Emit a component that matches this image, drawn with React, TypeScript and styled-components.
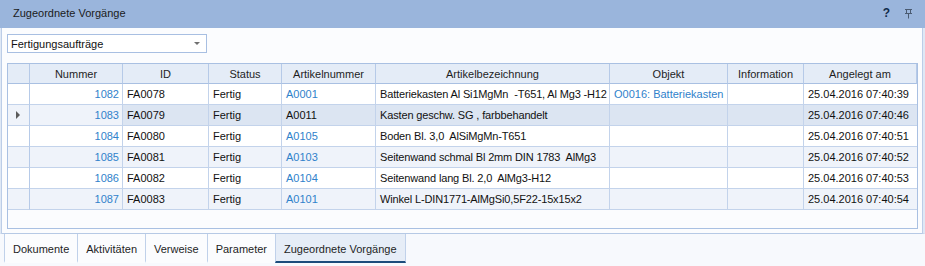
import React from 'react'
import styled, { createGlobalStyle } from 'styled-components'

const GlobalStyle = createGlobalStyle`
  html, body {
    margin: 0;
    padding: 0;
    background: #ffffff;
  }
  body {
    font-family: 'Liberation Sans', Arial, sans-serif;
    font-size: 11px;
    color: #1e1e1e;
  }
`

type Row = {
  nummer: number
  id: string
  status: string
  artikelnummer: string
  artikelLink: boolean
  bezeichnung: string
  objekt?: string
  information?: string
  angelegt: string
}

const rows: Row[] = [
  {
    nummer: 1082,
    id: 'FA0078',
    status: 'Fertig',
    artikelnummer: 'A0001',
    artikelLink: true,
    bezeichnung: 'Batteriekasten Al Si1MgMn  -T651, Al Mg3 -H12',
    objekt: 'O0016: Batteriekasten',
    angelegt: '25.04.2016 07:40:39',
  },
  {
    nummer: 1083,
    id: 'FA0079',
    status: 'Fertig',
    artikelnummer: 'A0011',
    artikelLink: false,
    bezeichnung: 'Kasten geschw. SG , farbbehandelt',
    angelegt: '25.04.2016 07:40:46',
  },
  {
    nummer: 1084,
    id: 'FA0080',
    status: 'Fertig',
    artikelnummer: 'A0105',
    artikelLink: true,
    bezeichnung: 'Boden Bl. 3,0  AlSiMgMn-T651',
    angelegt: '25.04.2016 07:40:51',
  },
  {
    nummer: 1085,
    id: 'FA0081',
    status: 'Fertig',
    artikelnummer: 'A0103',
    artikelLink: true,
    bezeichnung: 'Seitenwand schmal Bl 2mm DIN 1783  AlMg3',
    angelegt: '25.04.2016 07:40:52',
  },
  {
    nummer: 1086,
    id: 'FA0082',
    status: 'Fertig',
    artikelnummer: 'A0104',
    artikelLink: true,
    bezeichnung: 'Seitenwand lang Bl. 2,0  AlMg3-H12',
    angelegt: '25.04.2016 07:40:53',
  },
  {
    nummer: 1087,
    id: 'FA0083',
    status: 'Fertig',
    artikelnummer: 'A0101',
    artikelLink: true,
    bezeichnung: 'Winkel L-DIN1771-AlMgSi0,5F22-15x15x2',
    angelegt: '25.04.2016 07:40:54',
  },
]

const columns = ['', 'Nummer', 'ID', 'Status', 'Artikelnummer', 'Artikelbezeichnung', 'Objekt', 'Information', 'Angelegt am']

const tabs = ['Dokumente', 'Aktivitäten', 'Verweise', 'Parameter', 'Zugeordnete Vorgänge']

const SELECTED_ROW = 1

const Panel = styled.div`
  width: 925px;
  height: 266px;
  display: flex;
  flex-direction: column;
  background: #f4f7fc;
  box-sizing: border-box;
  overflow: hidden;
`

const TitleBar = styled.div`
  height: 28px;
  flex: none;
  display: flex;
  align-items: center;
  padding: 0 12px 0 13px;
  background: #9ab5dc;
  color: #1b1b1b;
  font-size: 11px;
  box-sizing: border-box;
`

const Title = styled.span`
  flex: 1;
  padding-bottom: 2px;
`

const TitleButtons = styled.div`
  display: flex;
  align-items: center;
  gap: 14px;
  padding-bottom: 2px;
`

const HelpGlyph = styled.span`
  font-weight: bold;
  font-size: 12px;
  color: #102a4a;
`

const Body = styled.div`
  flex: none;
  height: 206px;
  display: flex;
  flex-direction: column;
  background: #fbfcfe;
  border-left: 2px solid #dfe8f5;
  border-right: 3px solid #dfe8f5;
  border-bottom: 1px solid #b6c9e5;
  box-sizing: border-box;
  padding: 6px 2px 0 5px;
  position: relative;
  &::before {
    content: '';
    position: absolute;
    left: -1px;
    top: 0;
    bottom: 0;
    width: 1px;
    background: #bccde7;
  }
  &::after {
    content: '';
    position: absolute;
    right: -1px;
    top: 0;
    bottom: 0;
    width: 1px;
    background: #bccde7;
  }
`

const Combo = styled.div`
  width: 200px;
  height: 19px;
  flex: none;
  display: flex;
  align-items: center;
  justify-content: space-between;
  padding: 0 6px 0 3px;
  background: #ffffff;
  border: 1px solid #a8bfe2;
  box-sizing: border-box;
  font-size: 11px;
  color: #111;
`

const ComboArrow = styled.span`
  width: 0;
  height: 0;
  border-left: 3px solid transparent;
  border-right: 3px solid transparent;
  border-top: 3px solid #707070;
`

const Grid = styled.div`
  margin-top: 10px;
  width: 911px;
  height: 166px;
  border: 1px solid #a9c0e2;
  box-sizing: border-box;
  background: #fbfcfe;
  display: grid;
  grid-template-columns: 22px 93px 86px 73px 94px 234px 118px 76px 113px;
  grid-auto-rows: 21px;
  grid-template-rows: 20px;
  align-content: start;
`

const HeaderCell = styled.div`
  background: #e4ecf7;
  border-right: 1px solid #b6cae8;
  border-bottom: 1px solid #a9c0e2;
  display: flex;
  align-items: center;
  justify-content: center;
  color: #1e1e1e;
  font-size: 11px;
  &:last-child {
    border-right: none;
  }
`

type Tone = 'white' | 'alt' | 'sel'

const Cell = styled.div<{ $align?: 'left' | 'right'; $tone: Tone; $link?: boolean; $tight?: boolean }>`
  background: ${(p) => (p.$tone === 'sel' ? '#dce5f2' : p.$tone === 'alt' ? '#eff3fa' : '#ffffff')};
  border-right: 1px solid #c3d3eb;
  border-bottom: 1px solid #c3d3eb;
  display: flex;
  align-items: center;
  justify-content: ${(p) => (p.$align === 'right' ? 'flex-end' : 'flex-start')};
  padding: 0 3px 0 4px;
  color: ${(p) => (p.$link ? '#2f82cb' : '#111111')};
  font-size: 11px;
  letter-spacing: ${(p) => (p.$tight ? '-0.15px' : 'normal')};
  white-space: pre;
  overflow: hidden;
  box-sizing: border-box;
  &:nth-child(9n) {
    border-right: none;
  }
`

const IndicatorCell = styled.div<{ $tone: Tone }>`
  background: ${(p) => (p.$tone === 'alt' ? '#eff3fa' : '#ffffff')};
  border-right: 1px solid #b6cae8;
  border-bottom: 1px solid #c3d3eb;
  display: flex;
  align-items: center;
  justify-content: center;
`

const RowMarker = styled.span`
  width: 0;
  height: 0;
  border-top: 4px solid transparent;
  border-bottom: 4px solid transparent;
  border-left: 4px solid #5b5b5b;
  margin-left: -2px;
`

const TabStrip = styled.div`
  flex: 1;
  display: flex;
  align-items: stretch;
  padding: 0 0 3px 4px;
  background: #f7f9fd;
`

const Tab = styled.div<{ $active?: boolean }>`
  display: flex;
  align-items: center;
  padding: 3px 8px 0 8px;
  font-size: 11px;
  color: #1e1e1e;
  background: ${(p) => (p.$active ? '#e6edf7' : '#fbfcfe')};
  border-left: 1px solid #c0d1ea;
  border-right: 1px solid #c0d1ea;
  margin-right: -1px;
  box-sizing: border-box;
  border-bottom: 2px solid ${(p) => (p.$active ? '#1c4c7c' : '#fbfcfe')};
`

function PinIcon() {
  return (
    <svg width="9" height="11" viewBox="0 0 9 11">
      <path d="M1 1.5h7M2.5 1.5v4M6.5 1.5v4M1 5.5h7M4.5 5.5v5" stroke="#4a5b72" strokeWidth="1" fill="none" />
    </svg>
  )
}

export default function App() {
  return (
    <>
      <GlobalStyle />
      <Panel>
        <TitleBar>
          <Title>Zugeordnete Vorgänge</Title>
          <TitleButtons>
            <HelpGlyph>?</HelpGlyph>
            <PinIcon />
          </TitleButtons>
        </TitleBar>
        <Body>
          <Combo>
            <span>Fertigungsaufträge</span>
            <ComboArrow />
          </Combo>
          <Grid>
            {columns.map((c, i) => (
              <HeaderCell key={`h-${i}`}>{c}</HeaderCell>
            ))}
            {rows.map((r, ri) => {
              const base: Tone = ri % 2 === 1 ? 'alt' : 'white'
              const tone: Tone = ri === SELECTED_ROW ? 'sel' : base
              return (
                <React.Fragment key={r.id}>
                  <IndicatorCell $tone={base}>{ri === SELECTED_ROW ? <RowMarker /> : null}</IndicatorCell>
                  <Cell $align="right" $tone={base} $link>
                    {r.nummer}
                  </Cell>
                  <Cell $tone={tone}>{r.id}</Cell>
                  <Cell $tone={tone}>{r.status}</Cell>
                  <Cell $tone={tone} $link={r.artikelLink}>
                    {r.artikelnummer}
                  </Cell>
                  <Cell $tone={tone} $tight>
                    {r.bezeichnung}
                  </Cell>
                  <Cell $tone={tone} $link>
                    {r.objekt}
                  </Cell>
                  <Cell $tone={tone}>{r.information}</Cell>
                  <Cell $tone={tone}>{r.angelegt}</Cell>
                </React.Fragment>
              )
            })}
          </Grid>
        </Body>
        <TabStrip>
          {tabs.map((t, i) => (
            <Tab key={t} $active={i === tabs.length - 1}>
              {t}
            </Tab>
          ))}
        </TabStrip>
      </Panel>
    </>
  )
}
